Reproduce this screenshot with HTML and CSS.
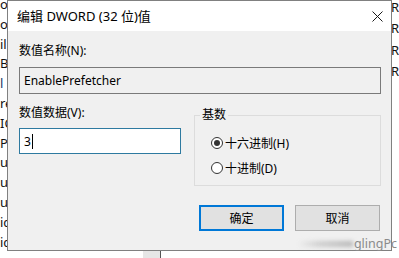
FILE: index.html
```html
<!DOCTYPE html>
<html>
	<head>
		<meta charset="UTF-8">
		<title>编辑 DWORD (32 位)值</title>
		<link rel="stylesheet" href="styles.css">
	</head>
	<body>
		<div class="screen">
			<!--后面的注册表编辑器窗口-->
			<div class="backdrop">
				<div class="tree-col">
					<div>ol</div>
					<div>ol</div>
					<div>il</div>
					<div>Bo</div>
					<div class="sel">l</div>
					<div>re</div>
					<div>IC</div>
					<div>Po</div>
					<div>ur</div>
					<div>ur</div>
					<div>ur</div>
					<div>ic</div>
					<div>ic</div>
				</div>
				<div class="name-col">
					<div>R</div>
					<div>R</div>
					<div>R</div>
					<div>R</div>
				</div>
				<div class="scroll-thumb"></div>
			</div>

			<!--对话框-->
			<div class="dialog">
				<div class="titlebar">
					<span class="title">编辑 DWORD (32 位)值</span>
					<svg class="close" width="11" height="11" viewBox="0 0 11 11">
						<path d="M0.5 0.5 L10.5 10.5 M10.5 0.5 L0.5 10.5" stroke="#1a1a1a" stroke-width="1" fill="none"/>
					</svg>
				</div>
				<div class="dialog-body">
					<div class="label">数值名称(N):</div>
					<div class="field readonly">EnablePrefetcher</div>

					<div class="lower">
						<div class="value-col">
							<div class="label">数值数据(V):</div>
							<div class="field edit">3<span class="caret"></span></div>
						</div>
						<fieldset class="base-group">
							<legend>基数</legend>
							<div class="radio-row first"><span class="radio checked"></span>十六进制(H)</div>
							<div class="radio-row"><span class="radio"></span>十进制(D)</div>
						</fieldset>
					</div>

					<div class="buttons">
						<div class="btn default">确定</div>
						<div class="btn">取消</div>
					</div>
				</div>
			</div>

			<!--水印-->
			<div class="watermark"><span class="smudge"></span>glingPc</div>
		</div>
	</body>
</html>
```

FILE: styles.css
```css
*{
	margin: 0px;
	padding: 0px;
	box-sizing: border-box;
}

body{
	background-color: #fff;
	font-family: "Noto Sans", "Noto Sans CJK SC", sans-serif;
	font-size: 12px;
	color: #000;
}

.screen{
	width: 399px;
	height: 258px;
	position: relative;
	overflow: hidden;
	background-color: #fff;
}

/*后面的窗口*/
.backdrop{
	display: flex;
	justify-content: space-between;
	height: 100%;
}

.tree-col{
	width: 20px;
	margin-top: -5px;
	line-height: 19.8px;
	font-size: 13px;
	color: #111;
}

.tree-col .sel{
	color: #1b3a6a;
}

.name-col{
	width: 8px;
	margin-top: -3px;
	line-height: 21.3px;
	font-size: 13px;
	color: #111;
}

.scroll-thumb{
	position: absolute;
	left: 143px;
	top: 251px;
	width: 18px;
	height: 7px;
	background-color: #e6e6e6;
	border-right: solid 1px #555;
}

/*对话框*/
.dialog{
	position: absolute;
	left: 7px;
	top: 0px;
	width: 385px;
	height: 251px;
	border: solid 1px #808080;
	background-color: #f0f0f0;
}

.titlebar{
	height: 30px;
	background-color: #fff;
	display: flex;
	align-items: center;
	justify-content: space-between;
	padding: 0 8px 0 9px;
}

.title{
	font-size: 13px;
	line-height: 16px;
}

.close{
	display: block;
}

.dialog-body{
	padding: 12px 10px 0 11px;
}

.label{
	line-height: 16px;
}

.field{
	height: 27px;
	margin-top: 8px;
	border: solid 1px #7a7a7a;
	padding-left: 4px;
	display: flex;
	align-items: center;
	font-size: 12px;
}

.readonly{
	background-color: #f0f0f0;
}

.edit{
	height: 26px;
	margin-top: 7px;
	background-color: #fff;
	border-color: #2e7aa0;
}

.caret{
	display: inline-block;
	width: 1px;
	height: 15px;
	margin-left: 1px;
	background-color: #000;
}

.lower{
	display: flex;
	align-items: flex-start;
	gap: 13px;
	margin-top: 11px;
}

.value-col{
	width: 162px;
}

/*基数分组框*/
.base-group{
	width: 187px;
	margin-top: 2px;
	border: solid 1px #dcdcdc;
	padding: 0 0 8px 0;
	min-width: 0;
}

.base-group legend{
	margin-left: 5px;
	padding: 0 2px;
	line-height: 16px;
}

.radio-row{
	height: 18px;
	display: flex;
	align-items: center;
	padding-left: 16px;
	margin-top: 7px;
}

.radio-row.first{
	margin-top: 11px;
}

.radio{
	width: 12px;
	height: 12px;
	border: solid 1px #333;
	border-radius: 50%;
	background-color: #fff;
	margin-right: 2px;
	display: flex;
	align-items: center;
	justify-content: center;
}

.radio.checked::after{
	content: "";
	width: 6px;
	height: 6px;
	border-radius: 50%;
	background-color: #333;
}

/*按钮*/
.buttons{
	display: flex;
	justify-content: flex-end;
	gap: 11px;
	margin-top: 19px;
	padding-right: 1px;
}

.btn{
	width: 85px;
	height: 26px;
	border: solid 1px #adadad;
	background-color: #e1e1e1;
	display: flex;
	align-items: center;
	justify-content: center;
}

.btn.default{
	border: solid 2px #0078d7;
}

/*水印*/
.watermark{
	position: absolute;
	right: 2px;
	top: 237px;
	display: flex;
	align-items: center;
	font-size: 12.5px;
	color: #8a8a8a;
	line-height: 14px;
}

.smudge{
	width: 55px;
	height: 6px;
	margin-right: 1px;
	background: linear-gradient(to right, rgba(200,200,200,0), #cfcfcf 40%, #b8b8b8);
	filter: blur(2px);
}
```
